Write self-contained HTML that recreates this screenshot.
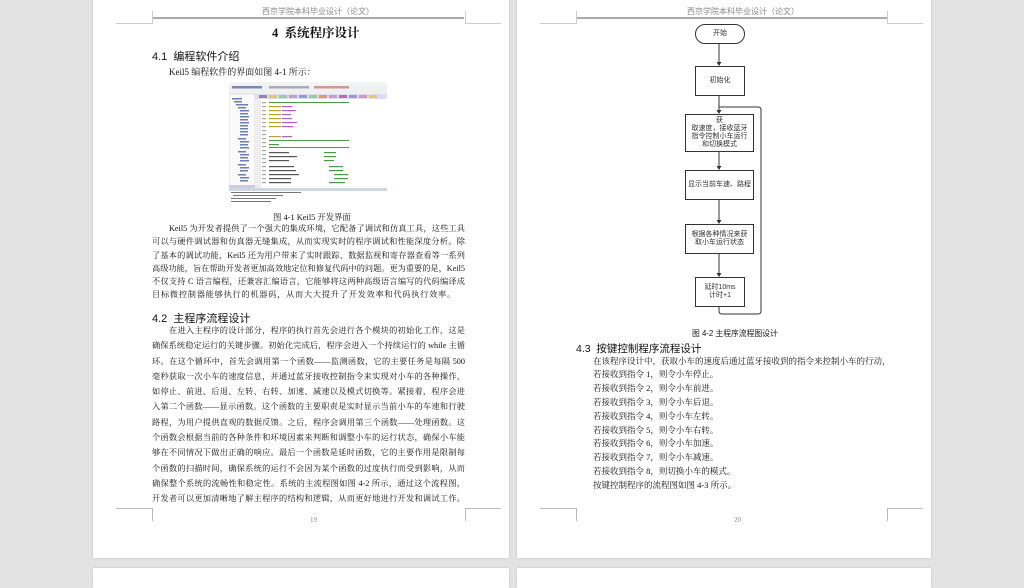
<!DOCTYPE html>
<html><head><meta charset="utf-8"><style>
html,body{margin:0;padding:0}
body{width:1024px;height:575px;background:#e3e3e3;position:relative;overflow:hidden;font-family:"Liberation Serif","Noto Serif CJK SC",serif;color:#111}
.page{position:absolute;background:#fff;box-shadow:0 0 2px #bbb}
.a{position:absolute;white-space:nowrap}
.j{position:absolute;left:152px;width:313px;font-size:8.2px;text-align:justify;text-align-last:justify;white-space:nowrap;line-height:12px}
.hd{font-size:8px;color:#888}
.cm{position:absolute;border-color:#bbb;border-style:solid;width:35px;height:12px}
.b{position:absolute;border:1.3px solid #333;background:#fff;font-family:"Liberation Sans","Noto Sans CJK SC",sans-serif;font-size:7px;text-align:center;display:flex;align-items:center;justify-content:center;line-height:8.2px;color:#333;box-sizing:border-box}
.l2{position:absolute;left:593px;font-size:8.5px;font-family:"Liberation Serif","Noto Serif CJK SC",serif;color:#111;white-space:nowrap}
</style></head><body>
<div class="page" style="left:93px;top:-2px;width:416px;height:560px"></div>
<div class="page" style="left:517px;top:-2px;width:414px;height:560px"></div>
<div class="page" style="left:93px;top:568px;width:416px;height:20px"></div>
<div class="page" style="left:517px;top:568px;width:414px;height:20px"></div>

<div class="a hd" style="left:262px;top:6px;font-family:'Liberation Sans','Noto Sans CJK SC',sans-serif">西京学院本科毕业设计（论文）</div>
<div class="a" style="left:152px;top:17px;width:312px;height:1.5px;background:#aaa"></div>
<div class="cm" style="left:116px;top:11px;border-width:0 1px 1px 0;width:36px;height:12px;border-color:#ccc"></div>
<div class="cm" style="left:465px;top:11px;border-width:0 0 1px 1px;border-color:#ccc"></div>

<div class="a" style="left:272px;top:23px;font-size:12.5px;font-weight:bold">4&nbsp; 系统程序设计</div>
<div class="a" style="left:152px;top:48px;font-size:11px;font-family:'Liberation Sans','Noto Sans CJK SC',sans-serif">4.1&nbsp; 编程软件介绍</div>
<div class="a" style="left:169px;top:65px;font-size:9px">Keil5 编程软件的界面如图 4-1 所示：</div>

<svg class="a" style="left:229px;top:82px" width="158" height="122" viewBox="0 0 158 122">
<rect width="158" height="122" fill="#fff"/>
<rect x="0" y="0" width="158" height="3" fill="#f4f4f4"/>
<rect x="0" y="3" width="158" height="5" fill="#eef0f4"/>
<g fill="#7a8ab0"><rect x="3" y="4" width="30" height="2.5"/><rect x="40" y="4" width="40" height="2.5" fill="#aab"/><rect x="85" y="4" width="35" height="2.5" fill="#c99"/></g>
<rect x="0" y="8" width="158" height="4" fill="#f0f0f0"/>
<rect x="26" y="12" width="132" height="5" fill="#dde"/>
<g><rect x="30" y="13" width="8" height="3" fill="#88a"/><rect x="40" y="13" width="8" height="3" fill="#dc6"/><rect x="50" y="13" width="8" height="3" fill="#9c9"/><rect x="60" y="13" width="8" height="3" fill="#c9c"/><rect x="70" y="13" width="8" height="3" fill="#99c"/><rect x="80" y="13" width="8" height="3" fill="#9c9"/><rect x="90" y="13" width="8" height="3" fill="#d96"/><rect x="100" y="13" width="8" height="3" fill="#c9c"/><rect x="110" y="13" width="8" height="3" fill="#c6a"/><rect x="120" y="13" width="8" height="3" fill="#99c"/><rect x="130" y="13" width="8" height="3" fill="#c9c"/><rect x="140" y="13" width="8" height="3" fill="#dc6"/></g>
<rect x="0" y="12" width="26" height="94" fill="#fafafa" stroke="#ccc" stroke-width=".5"/>
<g fill="#6b7fb0">
<rect x="3" y="16" width="10" height="1.5"/><rect x="5" y="19" width="8" height="1.5"/><rect x="7" y="22" width="12" height="1.5"/>
<rect x="9" y="25" width="8" height="1.5"/><rect x="11" y="28" width="9" height="1.5"/><rect x="11" y="31" width="8" height="1.5"/><rect x="11" y="34" width="9" height="1.5"/><rect x="11" y="37" width="8" height="1.5"/><rect x="11" y="40" width="9" height="1.5"/><rect x="11" y="43" width="8" height="1.5"/><rect x="11" y="46" width="8" height="1.5"/><rect x="11" y="49" width="8" height="1.5"/><rect x="11" y="52" width="8" height="1.5"/>
<rect x="9" y="56" width="8" height="1.5"/><rect x="11" y="59" width="9" height="1.5"/><rect x="11" y="62" width="8" height="1.5"/><rect x="11" y="65" width="9" height="1.5"/>
<rect x="9" y="69" width="8" height="1.5"/><rect x="11" y="72" width="9" height="1.5"/><rect x="11" y="75" width="8" height="1.5"/><rect x="11" y="78" width="9" height="1.5"/>
<rect x="9" y="82" width="8" height="1.5"/><rect x="11" y="85" width="9" height="1.5"/><rect x="11" y="88" width="8" height="1.5"/>
<rect x="9" y="92" width="8" height="1.5"/><rect x="11" y="95" width="9" height="1.5"/><rect x="11" y="98" width="8" height="1.5"/></g>
<rect x="0" y="103" width="26" height="3" fill="#ccd"/>
<rect x="26" y="17" width="6" height="89" fill="#eee"/>
<g fill="#a8a8a0"><rect x="33" y="20" width="4" height="1.2"/><rect x="33" y="24" width="4" height="1.2"/><rect x="33" y="28" width="4" height="1.2"/><rect x="33" y="32" width="4" height="1.2"/><rect x="33" y="36" width="4" height="1.2"/><rect x="33" y="40" width="4" height="1.2"/><rect x="33" y="44" width="4" height="1.2"/><rect x="33" y="48" width="4" height="1.2"/><rect x="33" y="52" width="4" height="1.2"/><rect x="33" y="56" width="4" height="1.2"/><rect x="33" y="60" width="4" height="1.2"/><rect x="33" y="64" width="4" height="1.2"/><rect x="33" y="68" width="4" height="1.2"/><rect x="33" y="72" width="4" height="1.2"/><rect x="33" y="76" width="4" height="1.2"/><rect x="33" y="80" width="4" height="1.2"/><rect x="33" y="84" width="4" height="1.2"/><rect x="33" y="88" width="4" height="1.2"/><rect x="33" y="92" width="4" height="1.2"/><rect x="33" y="96" width="4" height="1.2"/><rect x="33" y="100" width="4" height="1.2"/></g>
<g fill="#b8a040"><rect x="40" y="24" width="12" height="1.2"/><rect x="40" y="28" width="12" height="1.2"/><rect x="40" y="32" width="12" height="1.2"/><rect x="40" y="36" width="12" height="1.2"/><rect x="40" y="40" width="12" height="1.2"/><rect x="40" y="44" width="12" height="1.2"/><rect x="40" y="54" width="12" height="1.2"/></g>
<g fill="#b060c0"><rect x="53" y="24" width="10" height="1.2"/><rect x="53" y="28" width="14" height="1.2"/><rect x="53" y="32" width="9" height="1.2"/><rect x="53" y="36" width="10" height="1.2"/><rect x="53" y="40" width="15" height="1.2"/><rect x="53" y="44" width="11" height="1.2"/><rect x="53" y="54" width="10" height="1.2"/></g>
<g fill="#4a9a4a"><rect x="40" y="20" width="80" height="1"/><rect x="40" y="58" width="80" height="1"/><rect x="40" y="62" width="10" height="1.2"/><rect x="40" y="65" width="80" height="1"/><rect x="95" y="70" width="12" height="1.2"/><rect x="95" y="74" width="12" height="1.2"/><rect x="95" y="78" width="10" height="1.2"/><rect x="100" y="84" width="14" height="1.2"/><rect x="100" y="88" width="14" height="1.2"/><rect x="105" y="92" width="14" height="1.2"/><rect x="105" y="96" width="14" height="1.2"/><rect x="100" y="100" width="16" height="1.2"/></g>
<g fill="#555"><rect x="40" y="70" width="20" height="1.2"/><rect x="40" y="74" width="28" height="1.2"/><rect x="40" y="78" width="20" height="1.2"/><rect x="40" y="84" width="25" height="1.2"/><rect x="40" y="88" width="27" height="1.2"/><rect x="40" y="92" width="30" height="1.2"/><rect x="40" y="96" width="22" height="1.2"/><rect x="40" y="100" width="22" height="1.2"/></g>
<rect x="0" y="106" width="158" height="3" fill="#cfd6e4"/>
<g fill="#777"><rect x="2" y="110" width="70" height="1"/><rect x="4" y="113" width="50" height="1"/><rect x="2" y="116" width="45" height="1"/><rect x="2" y="119" width="40" height="1"/></g>
</svg>
<div class="a" style="left:273px;top:211px;font-size:8.4px">图 4-1 Keil5 开发界面</div>

<div class="j" style="top:223px;left:169px;width:296px">Keil5 为开发者提供了一个强大的集成环境，它配备了调试和仿真工具，这些工具</div>
<div class="j" style="top:236px">可以与硬件调试器和仿真器无缝集成，从而实现实时的程序调试和性能深度分析。除</div>
<div class="j" style="top:250px">了基本的调试功能，Keil5 还为用户带来了实时跟踪、数据监视和寄存器查看等一系列</div>
<div class="j" style="top:263px">高级功能，旨在帮助开发者更加高效地定位和修复代码中的问题。更为重要的是，Keil5</div>
<div class="j" style="top:276px">不仅支持 C 语言编程，还兼容汇编语言，它能够将这两种高级语言编写的代码编译成</div>
<div class="a" style="top:289px;left:152px;font-size:8.2px;line-height:12px;letter-spacing:.75px">目标微控制器能够执行的机器码，从而大大提升了开发效率和代码执行效率。</div>
<div class="a" style="left:152px;top:310px;font-size:11px;font-family:'Liberation Sans','Noto Sans CJK SC',sans-serif">4.2&nbsp; 主程序流程设计</div>
<div class="j" style="top:325px;left:169px;width:296px">在进入主程序的设计部分，程序的执行首先会进行各个模块的初始化工作，这是</div>
<div class="j" style="top:340px">确保系统稳定运行的关键步骤。初始化完成后，程序会进入一个持续运行的 while 主循</div>
<div class="j" style="top:356px">环。在这个循环中，首先会调用第一个函数——监测函数，它的主要任务是每隔 500</div>
<div class="j" style="top:371px">毫秒获取一次小车的速度信息，并通过蓝牙接收控制指令来实现对小车的各种操作，</div>
<div class="j" style="top:386px">如停止、前进、后退、左转、右转、加速、减速以及模式切换等。紧接着，程序会进</div>
<div class="j" style="top:401px">入第二个函数——显示函数。这个函数的主要职责是实时显示当前小车的车速和行驶</div>
<div class="j" style="top:417px">路程，为用户提供直观的数据反馈。之后，程序会调用第三个函数——处理函数。这</div>
<div class="j" style="top:432px">个函数会根据当前的各种条件和环境因素来判断和调整小车的运行状态，确保小车能</div>
<div class="j" style="top:447px">够在不同情况下做出正确的响应。最后一个函数是延时函数，它的主要作用是限制每</div>
<div class="j" style="top:463px">个函数的扫描时间，确保系统的运行不会因为某个函数的过度执行而受到影响，从而</div>
<div class="j" style="top:478px">确保整个系统的流畅性和稳定性。系统的主流程图如图 4-2 所示，通过这个流程图，</div>
<div class="j" style="top:493px">开发者可以更加清晰地了解主程序的结构和逻辑，从而更好地进行开发和调试工作。</div>
<div class="cm" style="left:116px;top:508px;border-width:1px 1px 0 0;width:36px"></div>
<div class="cm" style="left:465px;top:508px;border-width:1px 0 0 1px"></div>
<div class="a hd" style="left:310px;top:516px;font-size:7px">19</div>

<div class="a hd" style="left:687px;top:6px;font-family:'Liberation Sans','Noto Sans CJK SC',sans-serif">西京学院本科毕业设计（论文）</div>
<div class="a" style="left:576px;top:17px;width:311px;height:1.5px;background:#aaa"></div>
<div class="cm" style="left:540px;top:11px;border-width:0 1px 1px 0;width:36px;border-color:#ccc"></div>
<div class="cm" style="left:887px;top:11px;border-width:0 0 1px 1px;border-color:#ccc"></div>

<svg class="a" style="left:517px;top:0" width="414" height="330">
<g stroke="#333" stroke-width="1" fill="none">
<line x1="202" y1="43" x2="202" y2="64"/>
<line x1="202" y1="96" x2="202" y2="112"/>
<line x1="202" y1="152" x2="202" y2="168"/>
<line x1="202" y1="199" x2="202" y2="222"/>
<line x1="202" y1="253" x2="202" y2="275"/>
<path d="M202 306 V311 Q202 314 205 314 H241 Q244 314 244 311 V110 Q244 107 241 107 H202"/>
</g>
<g fill="#333">
<path d="M199.5 62 L204.5 62 L202 66Z"/><path d="M199.5 110 L204.5 110 L202 114Z"/><path d="M199.5 166 L204.5 166 L202 170Z"/><path d="M199.5 220 L204.5 220 L202 224Z"/><path d="M199.5 273 L204.5 273 L202 277Z"/>
</g>
</svg>
<div class="b" style="left:695px;top:24px;width:50px;height:20px;border-radius:10px">开始</div>
<div class="b" style="left:695px;top:66px;width:50px;height:30px">初始化</div>
<div class="b" style="left:685px;top:114px;width:69px;height:38px;padding:0 3px">获<br>取速度，接收蓝牙指令控制小车运行和切换模式</div>
<div class="b" style="left:685px;top:170px;width:69px;height:30px">显示当前车速、路程</div>
<div class="b" style="left:685px;top:224px;width:69px;height:30px;padding:0 3px">根据各种情况来获取小车运行状态</div>
<div class="b" style="left:695px;top:277px;width:50px;height:30px">延时10ms<br>计时+1</div>

<div class="a" style="left:692px;top:328px;font-size:7.8px;font-family:'Liberation Sans','Noto Sans CJK SC',sans-serif">图 4-2 主程序流程图设计</div>
<div class="a" style="left:576px;top:341px;font-size:10.5px;font-family:'Liberation Sans','Noto Sans CJK SC',sans-serif">4.3&nbsp; 按键控制程序流程设计</div>
<div class="l2" style="top:355px">在该程序设计中，获取小车的速度后通过蓝牙接收到的指令来控制小车的行动，</div>
<div class="l2" style="top:368px">若接收到指令 1，则令小车停止。</div>
<div class="l2" style="top:382px">若接收到指令 2，则令小车前进。</div>
<div class="l2" style="top:396px">若接收到指令 3，则令小车后退。</div>
<div class="l2" style="top:410px">若接收到指令 4，则令小车左转。</div>
<div class="l2" style="top:424px">若接收到指令 5，则令小车右转。</div>
<div class="l2" style="top:437px">若接收到指令 6，则令小车加速。</div>
<div class="l2" style="top:451px">若接收到指令 7，则令小车减速。</div>
<div class="l2" style="top:465px">若接收到指令 8，则切换小车的模式。</div>
<div class="l2" style="top:479px">按键控制程序的流程图如图 4-3 所示。</div>
<div class="cm" style="left:540px;top:508px;border-width:1px 1px 0 0;width:36px"></div>
<div class="cm" style="left:887px;top:508px;border-width:1px 0 0 1px"></div>
<div class="a hd" style="left:734px;top:516px;font-size:7px">20</div>
</body></html>
